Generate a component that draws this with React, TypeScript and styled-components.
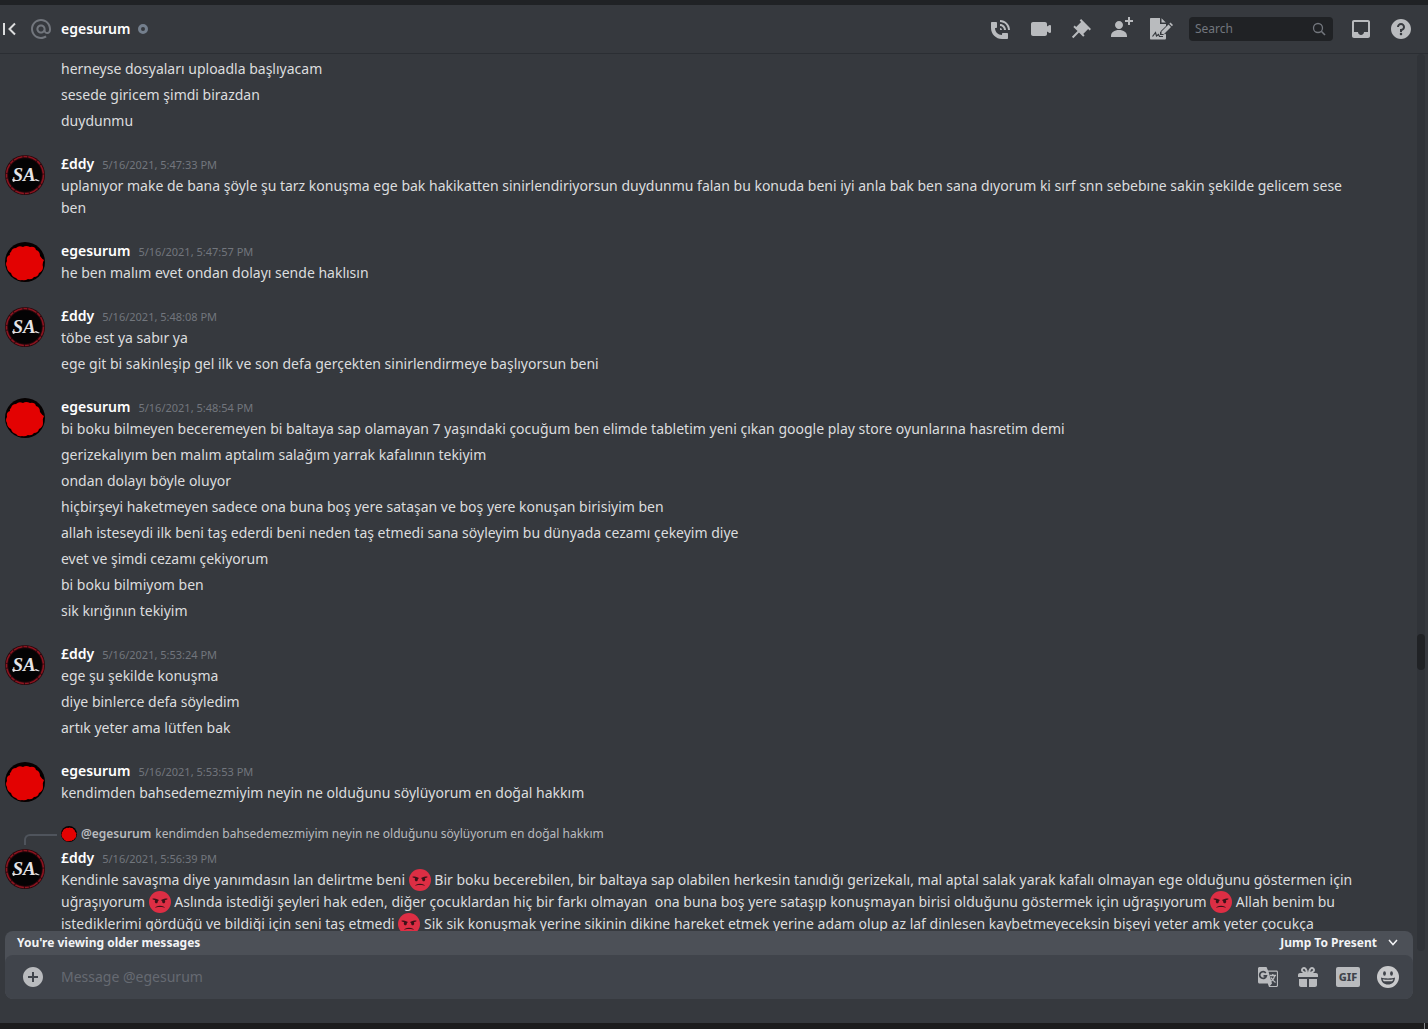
import React from 'react';
import styled, { createGlobalStyle } from 'styled-components';

const color = {
  background: '#36393e',
  chrome: '#202225',
  text: '#dcddde',
  bright: '#ffffff',
  icon: '#b9bbbe',
  muted: '#72767d',
  input: '#40444b',
  bar: '#4c5057',
  spine: '#4f545c',
  line: '#2b2e33',
};

const GlobalStyle = createGlobalStyle`
  * {
    box-sizing: border-box;
  }
  body {
    margin: 0;
    background: ${color.background};
    color: ${color.text};
    font-family: 'Noto Sans', 'Open Sans', sans-serif;
    font-size: 14px;
    line-height: 22px;
  }
`;

/* ---------- shell ---------- */

const Page = styled.div`
  display: flex;
  flex-direction: column;
  height: 100vh;
  overflow: hidden;
  border-top: 5px solid ${color.chrome};
`;

const Taskbar = styled.footer`
  display: flex;
  flex: none;
  justify-content: flex-end;
  height: 6px;
  padding-right: 3px;
  background: #1c1c1d;
`;

const TaskbarEdge = styled.span`
  width: 1px;
  background: #85878a;
`;

/* ---------- header ---------- */

const Header = styled.header`
  display: flex;
  flex: none;
  align-items: center;
  justify-content: space-between;
  height: 49px;
  padding-right: 15px;
  border-bottom: 1px solid ${color.line};
`;

const Cluster = styled.div<{ $gap: number }>`
  display: flex;
  align-items: center;
  gap: ${(p) => p.$gap}px;
`;

const IconButton = styled.button<{ $tone?: string }>`
  display: flex;
  flex: none;
  align-items: center;
  justify-content: center;
  width: 24px;
  height: 24px;
  padding: 0;
  border: 0;
  background: none;
  color: ${(p) => p.$tone ?? color.icon};
  cursor: pointer;
`;

const CollapseButton = styled(IconButton)`
  width: 20px;
`;

const Title = styled.h1`
  margin: 0;
  color: ${color.bright};
  font-size: 14px;
  font-weight: 600;
  line-height: 22px;
`;

const StatusRing = styled.span`
  width: 10px;
  height: 10px;
  border: 3px solid #747f8d;
  border-radius: 50%;
`;

const SearchBox = styled.label`
  display: flex;
  align-items: center;
  width: 144px;
  height: 24px;
  padding: 0 6px;
  border-radius: 4px;
  background: ${color.chrome};
  color: ${color.muted};
`;

const SearchInput = styled.input`
  flex: 1;
  min-width: 0;
  padding: 0;
  border: 0;
  outline: 0;
  background: none;
  color: ${color.text};
  font: inherit;
  font-size: 12px;

  &::placeholder {
    color: ${color.muted};
    opacity: 1;
  }
`;

/* ---------- messages ---------- */

const Conversation = styled.main`
  display: flex;
  flex: 1;
  min-height: 0;
`;

const MessageList = styled.ol`
  display: flex;
  flex: 1;
  flex-direction: column;
  gap: 21px;
  min-width: 0;
  margin: 0;
  padding: 4px 60px 0 0;
  overflow: hidden;
  list-style: none;
`;

const Group = styled.li`
  display: grid;
  flex: none;
  grid-template-columns: 61px minmax(0, 1fr);
`;

const AvatarSlot = styled.div`
  height: 42px;
  padding: 2px 0 0 5px;
`;

const Body = styled.div`
  display: flex;
  flex-direction: column;
  gap: 4px;
`;

const Byline = styled.div`
  display: flex;
  align-items: baseline;
  gap: 8px;
  height: 22px;
  margin-bottom: -4px;
`;

const Author = styled.span`
  color: ${color.bright};
  font-weight: 600;
`;

const Stamp = styled.time`
  color: ${color.muted};
  font-size: 11px;
`;

const Text = styled.p`
  margin: 0;
  white-space: pre-wrap;
`;

const Spine = styled.span`
  align-self: center;
  width: 33px;
  height: 11px;
  margin: 6px 0 0 24px;
  border-top: 2px solid ${color.spine};
  border-left: 2px solid ${color.spine};
  border-top-left-radius: 6px;
`;

const Reply = styled.div`
  display: flex;
  align-items: center;
  gap: 4px;
  height: 18px;
  margin-bottom: 4px;
  color: ${color.icon};
  font-size: 12px;
  line-height: 18px;
`;

const ReplyAuthor = styled.span`
  font-weight: 600;
`;

const EmojiGlyph = styled.svg`
  display: inline-block;
  width: 22px;
  height: 22px;
  vertical-align: bottom;
`;

const ScrollTrack = styled.div`
  display: flex;
  flex: none;
  flex-direction: column;
  width: 8px;
  margin-right: 3px;
  border-radius: 4px;
  background: #303338;
`;

const ScrollSpace = styled.span<{ $share: number }>`
  flex: ${(p) => p.$share};
`;

const ScrollThumb = styled.span`
  height: 36px;
  border-radius: 4px;
  background: ${color.chrome};
`;

/* ---------- composer ---------- */

const ComposerArea = styled.div`
  position: relative;
  flex: none;
  margin-top: -20px;
  padding: 0 15px 24px 5px;
`;

const Composer = styled.form`
  overflow: hidden;
  border-radius: 8px;
  background: ${color.bar};
`;

const OlderBar = styled.div`
  display: flex;
  align-items: center;
  justify-content: space-between;
  height: 24px;
  padding: 0 12px;
  color: #f2f3f5;
  font-size: 12px;
  font-weight: 700;
`;

const JumpButton = styled.button`
  display: flex;
  align-items: center;
  gap: 8px;
  padding: 0;
  border: 0;
  background: none;
  color: inherit;
  font: inherit;
  cursor: pointer;
`;

const InputRow = styled.div`
  display: flex;
  align-items: center;
  gap: 16px;
  height: 44px;
  padding: 0 13px 0 16px;
  border-radius: 8px;
  background: ${color.input};
`;

const MessageInput = styled.input`
  flex: 1;
  min-width: 0;
  padding: 0;
  border: 0;
  outline: 0;
  background: none;
  color: ${color.text};
  font: inherit;

  &::placeholder {
    color: #666a72;
    opacity: 1;
  }
`;

const GifBadge = styled.span`
  width: 24px;
  height: 20px;
  border-radius: 2px;
  background: ${color.icon};
  color: ${color.input};
  font: 800 11px/20px 'Noto Sans', sans-serif;
  text-align: center;
`;

/* ---------- drawings ---------- */

const Glyph = ({ d, size = 24 }: { d: string; size?: number }) => (
  <svg width={size} height={size} viewBox="0 0 24 24" fill="currentColor" fillRule="evenodd" aria-hidden="true">
    <path d={d} />
  </svg>
);

const glyphs = {
  at: 'M12 2C6.486 2 2 6.486 2 12C2 17.515 6.486 22 12 22C14.039 22 15.993 21.398 17.652 20.259L16.521 18.611C15.195 19.519 13.633 20 12 20C7.589 20 4 16.411 4 12C4 7.589 7.589 4 12 4C16.411 4 20 7.589 20 12V12.782C20 14.17 19.402 15 18.4 15L18.398 15.018C18.338 15.005 18.273 15 18.209 15H18C17.437 15 16.6 14.182 16.6 13.631V12C16.6 9.464 14.537 7.4 12 7.4C9.463 7.4 7.4 9.463 7.4 12C7.4 14.537 9.463 16.6 12 16.6C13.234 16.6 14.35 16.106 15.177 15.313C15.826 16.269 16.93 17 18 17L18.002 16.981C18.064 16.994 18.129 17 18.195 17H18.4C20.552 17 22 15.306 22 12.782V12C22 6.486 17.514 2 12 2ZM12 14.599C10.566 14.599 9.4 13.433 9.4 11.999C9.4 10.565 10.566 9.399 12 9.399C13.434 9.399 14.6 10.565 14.6 11.999C14.6 13.433 13.434 14.599 12 14.599Z',
  call: 'M11 5V3C16.515 3 21 7.486 21 13H19C19 8.589 15.411 5 11 5ZM17 13H15C15 10.795 13.206 9 11 9V7C14.309 7 17 9.691 17 13ZM11 11V13H13C13 11.896 12.105 11 11 11ZM14 16H18C18.553 16 19 16.447 19 17V21C19 21.553 18.553 22 18 22H13C6.925 22 2 17.075 2 11V6C2 5.447 2.448 5 3 5H7C7.553 5 8 5.447 8 6V10C8 10.553 7.553 11 7 11H6C6.063 14.938 9 18 13 18V17C13 16.447 13.447 16 14 16Z',
  video:
    'M21.526 8.149C21.231 7.966 20.862 7.951 20.553 8.105L18 9.382V7C18 5.897 17.103 5 16 5H4C2.897 5 2 5.897 2 7V17C2 18.104 2.897 19 4 19H16C17.103 19 18 18.104 18 17V14.618L20.553 15.894C20.694 15.965 20.847 16 21 16C21.183 16 21.365 15.949 21.526 15.851C21.82 15.668 22 15.347 22 15V9C22 8.653 21.82 8.332 21.526 8.149Z',
  pin: 'M22 12L12.101 2.101L10.686 3.514L12.101 4.929L7.151 9.878V9.88L5.736 8.465L4.322 9.88L8.565 14.122L2.908 19.778L4.322 21.192L9.979 15.536L14.222 19.778L15.636 18.364L14.222 16.95L19.171 12H19.172L20.586 13.414L22 12Z',
  addFriend:
    'M21 3H24V5H21V8H19V5H16V3H19V0H21V3ZM10 12C12.205 12 14 10.205 14 8C14 5.795 12.205 4 10 4C7.795 4 6 5.795 6 8C6 10.205 7.795 12 10 12ZM10 13C5.289 13 2 15.467 2 19V20H18V19C18 15.467 14.711 13 10 13Z',
  inbox:
    'M19 3H4.99C3.88 3 3.01 3.89 3.01 5L3 19C3 20.1 3.88 21 4.99 21H19C20.1 21 21 20.1 21 19V5C21 3.89 20.1 3 19 3ZM19 15H15C15 16.66 13.65 18 12 18C10.35 18 9 16.66 9 15H4.99V5H19V15Z',
  help: 'M12 2C6.486 2 2 6.487 2 12C2 17.515 6.486 22 12 22C17.514 22 22 17.515 22 12C22 6.487 17.514 2 12 2ZM12 18.25C11.31 18.25 10.75 17.691 10.75 17C10.75 16.31 11.31 15.75 12 15.75C12.69 15.75 13.25 16.31 13.25 17C13.25 17.691 12.69 18.25 12 18.25ZM13 13.875V15H11V12H12C13.104 12 14 11.103 14 10C14 8.896 13.104 8 12 8C10.896 8 10 8.896 10 10H8C8 7.795 9.795 6 12 6C14.205 6 16 7.795 16 10C16 11.861 14.723 13.429 13 13.875Z',
  plus: 'M12 2C6.486 2 2 6.487 2 12C2 17.515 6.486 22 12 22C17.514 22 22 17.515 22 12C22 6.487 17.514 2 12 2ZM17 13H13V17H11V13H7V11H11V7H13V11H17V13Z',
  gift: 'M16.886 8H20C21.104 8 22 8.896 22 10V12H2V10C2 8.896 2.897 8 4 8H7.114C6.663 7.764 6.236 7.477 5.879 7.121C4.709 5.951 4.709 4.048 5.879 2.879C7.012 1.746 8.986 1.746 10.121 2.877C11.758 4.514 11.979 7.595 11.998 7.941L12.002 7.941C12.022 7.595 12.242 4.514 13.879 2.877C15.014 1.745 16.986 1.746 18.121 2.877C19.29 4.049 19.29 5.952 18.121 7.121C17.764 7.477 17.337 7.764 16.886 8ZM7.293 5.707C6.903 5.316 6.903 4.682 7.293 4.292C7.481 4.103 7.732 4 8 4C8.268 4 8.519 4.103 8.707 4.292C9.297 4.882 9.641 5.94 9.825 6.822C8.945 6.639 7.879 6.293 7.293 5.707ZM14.174 6.824C14.359 5.941 14.702 4.883 15.293 4.293C15.481 4.103 15.732 4 16 4C16.268 4 16.519 4.103 16.706 4.291C17.096 4.682 17.097 5.316 16.707 5.707C16.116 6.298 15.057 6.642 14.174 6.824ZM3 14H11V22H5C3.897 22 3 21.103 3 20V14ZM13 14V22H19C20.104 22 21 21.103 21 20V14H13Z',
};

const CollapseIcon = () => (
  <svg width="20" height="24" viewBox="0 0 20 24" fill="none" stroke="currentColor" strokeWidth="2" aria-hidden="true">
    <path d="M4 6V18M15 6.500L9.500 12L15 17.500" />
  </svg>
);

const SignIcon = () => (
  <svg width="24" height="24" viewBox="0 0 24 24" aria-hidden="true">
    <path
      fill="currentColor"
      d="M2 1H11V7H17V10L11 15V18H14L17 15.500V21C17 22 16.500 22.500 15.500 22.500H2C1.300 22.500 1 22 1 21V2C1 1.400 1.400 1 2 1ZM12.500 1.200L16.800 5.500H12.500Z"
    />
    <path d="M3.500 19.500L6.500 15.500L7.500 19L9.500 17.500L10.500 19.500H14" fill="none" stroke="#36393e" strokeWidth="1.200" />
    <path d="M12.500 14.500L19.500 7.500L22 10L15.500 17" fill="none" stroke="#36393e" strokeWidth="1.500" />
    <path fill="currentColor" d="M12.500 14.500L19.500 7.500L22 10L15 17H12.500ZM20.300 6.700L21.500 5.500L24.000 8L22.900 9.300Z" />
  </svg>
);

const SearchIcon = () => (
  <svg width="16" height="16" viewBox="0 0 16 16" fill="none" stroke="currentColor" aria-hidden="true">
    <circle cx="7" cy="7" r="4.500" strokeWidth="1.300" />
    <path d="M10.300 10.300L14 14" strokeWidth="1.600" />
  </svg>
);

const ChevronIcon = () => (
  <svg width="16" height="16" viewBox="0 0 16 16" fill="none" stroke="currentColor" strokeWidth="1.500" aria-hidden="true">
    <path d="M4 5L8 9.500L12 5" />
  </svg>
);

const TranslateIcon = () => (
  <svg width="24" height="24" viewBox="0 0 24 24" aria-hidden="true">
    <path fill="currentColor" d="M3.500 2H10.500L12 5.500H20.500C21.300 5.500 22 6.200 22 7V20.500C22 21.300 21.300 22 20.500 22H13L11.800 18.500H3.500C2.700 18.500 2 17.800 2 17V3.500C2 2.700 2.700 2 3.500 2Z" />
    <path fill="#40444b" d="M12.500 6.800H20.300C20.600 6.800 20.900 7.100 20.900 7.400V20.200C20.900 20.600 20.600 20.900 20.300 20.900H13.900L16 18.500Z" />
    <path d="M9.800 8A3.400 3.400 0 1 0 10.400 10.800H7.500" fill="none" stroke="#40444b" strokeWidth="1.700" />
    <path d="M13.800 10.500H20M16.800 9V10.500M18.800 10.500C18.300 13.500 16.800 15 15.300 16.200M15 12.500C16 14.500 17.500 16 19.500 17.500" fill="none" stroke="currentColor" strokeWidth="1.300" />
  </svg>
);

const GrinIcon = () => (
  <svg width="24" height="24" viewBox="0 0 24 24" aria-hidden="true">
    <circle cx="12" cy="12" r="11" fill="#c9cacc" />
    <ellipse cx="8.500" cy="8.500" rx="1.400" ry="2.200" fill="#40444b" />
    <ellipse cx="15.500" cy="8.500" rx="1.400" ry="2.200" fill="#40444b" />
    <path d="M5 12.500C9 13.700 15 13.700 19 12.500C19 17 16 19.500 12 19.500C8 19.500 5 17 5 12.500Z" fill="#40444b" />
    <path d="M6.700 14.200C10 15 14 15 17.300 14.200C17 15.600 16.200 16.300 15.500 16.300H8.500C7.800 16.300 7 15.600 6.700 14.200Z" fill="#c9cacc" />
  </svg>
);

const Angry = () => (
  <EmojiGlyph viewBox="0 0 36 36" role="img" aria-label="angry face">
    <circle cx="18" cy="18" r="18" fill="#dd2e44" />
    <path
      fill="#3b1218"
      d="M25.500 26.300C25.400 26.200 23 24 18 24S10.600 26.200 10.500 26.300C10.300 26.500 10.200 26.800 10.400 27C10.500 27.300 10.800 27.400 11.100 27.200C11.200 27.200 13.500 26 18 26S24.800 27.200 24.900 27.200C25.200 27.400 25.500 27.300 25.600 27C25.800 26.800 25.700 26.500 25.500 26.300ZM6.200 12.300C5.600 12.300 5.500 13.600 6.500 13.900L10.200 15.200C9.500 16 9.500 16.500 9.500 17C9.500 18.700 10.600 20 12 20S14.500 18.700 14.500 17V16.300C15.800 16.400 16.300 15.200 15.500 14.500C12.700 12.800 9.500 12.300 6.200 12.300ZM29.800 12.300C30.400 12.300 30.500 13.600 29.500 13.900L25.800 15.200C26.500 16 26.500 16.500 26.500 17C26.500 18.700 25.400 20 24 20S21.500 18.700 21.500 17V16.300C20.200 16.400 19.700 15.200 20.500 14.500C23.300 12.800 26.500 12.300 29.800 12.300Z"
    />
  </EmojiGlyph>
);

const RedAvatar = ({ size = 40 }: { size?: number }) => (
  <svg width={size} height={size} viewBox="0 0 40 40" display="block" aria-hidden="true">
    <circle cx="20" cy="20" r="20" fill="#050000" />
    <path
      fill="#e30202"
      d="M6 10Q7 6 11 6Q14 3 18 5Q21 3 25 5Q30 4 31 8Q35 9 35 14Q37 17 39 18Q37 21 38 25Q38 29 34 31Q33 35 29 35Q27 38 23 37Q20 39 17 38Q13 39 11 36Q7 35 6 31Q2 29 2 25Q0 22 2 19Q1 14 5 13Q4 11 6 10Z"
    />
  </svg>
);

const InitialsText = styled.text`
  font: italic 700 19px 'Liberation Serif', serif;
`;

const InitialsAvatar = () => (
  <svg width="40" height="40" viewBox="0 0 40 40" display="block" aria-hidden="true">
    <circle cx="20" cy="20" r="20" fill="#2a080c" />
    <circle cx="20" cy="20" r="18.500" fill="none" stroke="#8d1420" strokeWidth="1.500" strokeDasharray="9 1 4 1" />
    <circle cx="20" cy="20" r="16.800" fill="#040304" />
    <InitialsText x="19" y="26" textAnchor="middle" fill="#e4e4e8">
      SA
    </InitialsText>
    <path d="M7 24Q10 26 14 24.500L8 27ZM29 25Q32 26.500 35 26L31 24Z" fill="#e4e4e8" />
  </svg>
);

/* ---------- content ---------- */

type Person = 'eddy' | 'ege';
type Entry = {
  from?: Person;
  at?: string;
  reply?: string;
  lines: React.ReactNode[];
};

const names: Record<Person, string> = { eddy: '£ddy', ege: 'egesurum' };

const entries: Entry[] = [
  { lines: ['herneyse dosyaları uploadla başlıyacam', 'sesede giricem şimdi birazdan', 'duydunmu'] },
  {
    from: 'eddy',
    at: '5/16/2021, 5:47:33 PM',
    lines: [
      'uplanıyor make de bana şöyle şu tarz konuşma ege bak hakikatten sinirlendiriyorsun duydunmu falan bu konuda beni iyi anla bak ben sana dıyorum ki sırf snn sebebıne sakin şekilde gelicem sese ben',
    ],
  },
  { from: 'ege', at: '5/16/2021, 5:47:57 PM', lines: ['he ben malım evet ondan dolayı sende haklısın'] },
  {
    from: 'eddy',
    at: '5/16/2021, 5:48:08 PM',
    lines: ['töbe est ya sabır ya', 'ege git bi sakinleşip gel ilk ve son defa gerçekten sinirlendirmeye başlıyorsun beni'],
  },
  {
    from: 'ege',
    at: '5/16/2021, 5:48:54 PM',
    lines: [
      'bi boku bilmeyen beceremeyen bi baltaya sap olamayan 7 yaşındaki çocuğum ben elimde tabletim yeni çıkan google play store oyunlarına hasretim demi',
      'gerizekalıyım ben malım aptalım salağım yarrak kafalının tekiyim',
      'ondan dolayı böyle oluyor',
      'hiçbirşeyi haketmeyen sadece ona buna boş yere sataşan ve boş yere konuşan birisiyim ben',
      'allah isteseydi ilk beni taş ederdi beni neden taş etmedi sana söyleyim bu dünyada cezamı çekeyim diye',
      'evet ve şimdi cezamı çekiyorum',
      'bi boku bilmiyom ben',
      'sik kırığının tekiyim',
    ],
  },
  {
    from: 'eddy',
    at: '5/16/2021, 5:53:24 PM',
    lines: ['ege şu şekilde konuşma', 'diye binlerce defa söyledim', 'artık yeter ama lütfen bak'],
  },
  {
    from: 'ege',
    at: '5/16/2021, 5:53:53 PM',
    lines: ['kendimden bahsedemezmiyim neyin ne olduğunu söylüyorum en doğal hakkım'],
  },
  {
    from: 'eddy',
    at: '5/16/2021, 5:56:39 PM',
    reply: 'kendimden bahsedemezmiyim neyin ne olduğunu söylüyorum en doğal hakkım',
    lines: [
      <>
        {'Kendinle savaşma diye yanımdasın lan delirtme beni '}
        <Angry />
        {' Bir boku becerebilen, bir baltaya sap olabilen herkesin tanıdığı gerizekalı, mal aptal salak yarak kafalı olmayan ege olduğunu göstermen için uğraşıyorum '}
        <Angry />
        {' Aslında istediği şeyleri hak eden, diğer çocuklardan hiç bir farkı olmayan  ona buna boş yere sataşıp konuşmayan birisi olduğunu göstermek için uğraşıyorum '}
        <Angry />
        {' Allah benim bu istediklerimi gördüğü ve bildiği için seni taş etmedi '}
        <Angry />
        {' Sik sik konuşmak yerine sikinin dikine hareket etmek yerine adam olup az laf dinlesen kaybetmeyeceksin bişeyi yeter amk yeter çocukça'}
      </>,
    ],
  },
];

const MessageGroup = ({ from, at, reply, lines }: Entry) => (
  <Group>
    {reply && (
      <>
        <Spine />
        <Reply>
          <RedAvatar size={16} />
          <ReplyAuthor>@egesurum</ReplyAuthor>
          <span>{reply}</span>
        </Reply>
      </>
    )}
    <AvatarSlot>{from && (from === 'eddy' ? <InitialsAvatar /> : <RedAvatar />)}</AvatarSlot>
    <Body>
      {from && (
        <Byline>
          <Author>{names[from]}</Author>
          <Stamp>{at}</Stamp>
        </Byline>
      )}
      {lines.map((line, i) => (
        <Text key={i}>{line}</Text>
      ))}
    </Body>
  </Group>
);

export default function App() {
  return (
    <Page>
      <GlobalStyle />
      <Header>
        <Cluster $gap={8}>
          <Cluster $gap={9}>
            <CollapseButton $tone={color.text} aria-label="Hide sidebar">
              <CollapseIcon />
            </CollapseButton>
            <IconButton as="span" $tone={color.muted}>
              <Glyph d={glyphs.at} />
            </IconButton>
          </Cluster>
          <Title>egesurum</Title>
          <StatusRing />
        </Cluster>
        <Cluster $gap={16}>
          <IconButton aria-label="Start voice call">
            <Glyph d={glyphs.call} />
          </IconButton>
          <IconButton aria-label="Start video call">
            <Glyph d={glyphs.video} />
          </IconButton>
          <IconButton aria-label="Pinned messages">
            <Glyph d={glyphs.pin} />
          </IconButton>
          <IconButton aria-label="Add friends to DM">
            <Glyph d={glyphs.addFriend} />
          </IconButton>
          <IconButton aria-label="Edit note">
            <SignIcon />
          </IconButton>
          <SearchBox>
            <SearchInput type="text" placeholder="Search" aria-label="Search" />
            <SearchIcon />
          </SearchBox>
          <IconButton aria-label="Inbox">
            <Glyph d={glyphs.inbox} />
          </IconButton>
          <IconButton aria-label="Help">
            <Glyph d={glyphs.help} />
          </IconButton>
        </Cluster>
      </Header>

      <Conversation>
        <MessageList>
          {entries.map((entry, i) => (
            <MessageGroup key={i} {...entry} />
          ))}
        </MessageList>
        <ScrollTrack>
          <ScrollSpace $share={581} />
          <ScrollThumb />
          <ScrollSpace $share={281} />
        </ScrollTrack>
      </Conversation>

      <ComposerArea>
        <Composer onSubmit={(e) => e.preventDefault()}>
          <OlderBar>
            <span>You're viewing older messages</span>
            <JumpButton type="button">
              Jump To Present
              <ChevronIcon />
            </JumpButton>
          </OlderBar>
          <InputRow>
            <IconButton type="button" aria-label="Attach file">
              <Glyph d={glyphs.plus} />
            </IconButton>
            <MessageInput type="text" placeholder="Message @egesurum" aria-label="Message @egesurum" />
            <IconButton type="button" aria-label="Translate">
              <TranslateIcon />
            </IconButton>
            <IconButton type="button" aria-label="Send a gift">
              <Glyph d={glyphs.gift} />
            </IconButton>
            <IconButton type="button" aria-label="Open GIF picker">
              <GifBadge>GIF</GifBadge>
            </IconButton>
            <IconButton type="button" aria-label="Open emoji picker">
              <GrinIcon />
            </IconButton>
          </InputRow>
        </Composer>
      </ComposerArea>

      <Taskbar>
        <TaskbarEdge />
      </Taskbar>
    </Page>
  );
}
